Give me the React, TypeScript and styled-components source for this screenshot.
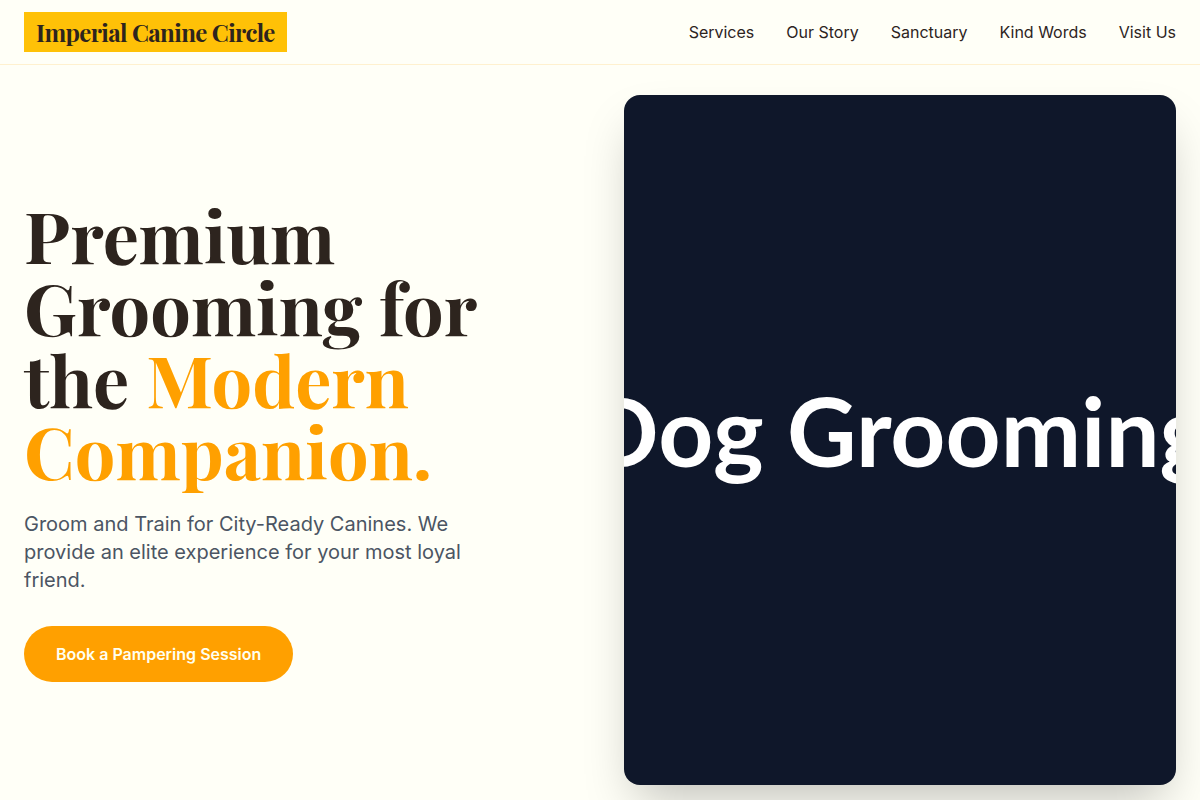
import React from "react";
import styled, { createGlobalStyle } from "styled-components";

const serif = `"Playfair Display", "Liberation Serif", serif`;

const GlobalStyle = createGlobalStyle`
  *, *::before, *::after { box-sizing: border-box; }
  body {
    margin: 0;
    background: #fffff7;
    color: #2d241e;
    font-family: Inter, sans-serif;
    font-size: 16px;
    line-height: 24px;
  }
`;

const Header = styled.header`
  position: relative;
  z-index: 1;
  display: flex;
  align-items: center;
  justify-content: space-between;
  padding: 12px 24px;
  background: #fffff7;
  border-bottom: 1px solid #fff1cf;
`;

const Logo = styled.a`
  padding: 4px 12px;
  background: #ffc107;
  color: #2d241e;
  font-family: ${serif};
  font-size: 24px;
  font-weight: 700;
  letter-spacing: -0.025em;
  line-height: 32px;
  text-decoration: none;
`;

const Nav = styled.nav`
  display: flex;
  gap: 32px;
`;

const NavLink = styled.a`
  color: #2d241e;
  text-decoration: none;
`;

const Hero = styled.main`
  display: grid;
  grid-template-columns: 1fr 1fr;
  align-items: center;
  gap: 48px;
  min-height: calc(100vh - 65px);
  padding: 15px 24px 0;
  overflow: hidden;
`;

const Copy = styled.div`
  display: flex;
  flex-direction: column;
  align-items: flex-start;
`;

const Title = styled.h1`
  margin: 0 0 24px;
  font-family: ${serif};
  font-size: 72px;
  font-weight: 700;
  line-height: 72px;
`;

const Accent = styled.span`
  color: #ffa000;
`;

const Lead = styled.p`
  max-width: 448px;
  margin: 0 0 32px;
  color: #4b5563;
  font-size: 20px;
  line-height: 28px;
`;

const BookButton = styled.button`
  padding: 16px 32px;
  border: 0;
  border-radius: 28px;
  background: #ffa000;
  color: #fffff0;
  font-family: inherit;
  font-size: 16px;
  font-weight: 600;
  line-height: 24px;
  cursor: pointer;
`;

const Picture = styled.div`
  display: flex;
  align-items: center;
  justify-content: center;
  aspect-ratio: 4 / 5;
  padding: 0 4px 20px 0;
  overflow: hidden;
  border-radius: 16px;
  background: #0f172a;
  box-shadow: 0 25px 50px -12px rgba(0, 0, 0, 0.25);
`;

const PictureText = styled.span`
  flex: none;
  color: #ffffff;
  font-family: Lato, sans-serif;
  font-size: 96px;
  font-weight: 700;
  line-height: 120px;
  white-space: nowrap;
`;

const links = [
  ["Services", "#services"],
  ["Our Story", "#story"],
  ["Sanctuary", "#sanctuary"],
  ["Kind Words", "#words"],
  ["Visit Us", "#visit"],
];

export default function App() {
  return (
    <>
      <GlobalStyle />
      <Header>
        <Logo href="#">Imperial Canine Circle</Logo>
        <Nav>
          {links.map(([label, href]) => (
            <NavLink key={href} href={href}>{label}</NavLink>
          ))}
        </Nav>
      </Header>
      <Hero>
        <Copy>
          <Title>
            Premium
            <br />
            Grooming for
            <br />
            the <Accent>Modern<br />Companion.</Accent>
          </Title>
          <Lead>
            Groom and Train for City-Ready Canines. We provide an elite
            experience for your most loyal friend.
          </Lead>
          <BookButton type="button">Book a Pampering Session</BookButton>
        </Copy>
        <Picture>
          <PictureText>Dog Grooming</PictureText>
        </Picture>
      </Hero>
    </>
  );
}
